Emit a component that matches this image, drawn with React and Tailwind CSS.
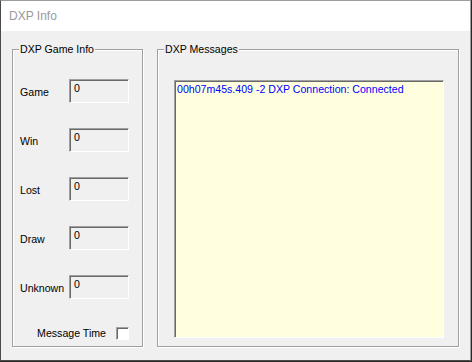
import React from 'react';

const font = { fontFamily: '"Liberation Sans", Arial, sans-serif' };

const stats = [
  { label: 'Game', value: '0' },
  { label: 'Win', value: '0' },
  { label: 'Lost', value: '0' },
  { label: 'Draw', value: '0' },
  { label: 'Unknown', value: '0' },
];

function GroupBox({ title, className, children }) {
  return (
    <div
      className={`relative border border-[#a0a0a0] shadow-[1px_1px_0_#ffffff,inset_1px_1px_0_#ffffff] ${className}`}
    >
      <span className="absolute left-[6px] top-[-7px] bg-[#f0f0f0] px-[1px] leading-[13px] text-black">
        {title}
      </span>
      {children}
    </div>
  );
}

export default function App() {
  return (
    <div className="h-[362px] w-[472px] bg-[#2b2828]" style={font}>
      <div className="flex h-[361px] w-[471px] flex-col border border-[#9c9c9c] border-l-[#4a4a4a] border-b-[#4a4a4a] bg-[#f0f0f0] text-[10.6px]">
        <div className="flex h-[30px] items-center bg-white pl-[8px] pb-[1px] text-[12px] text-[#9a9a9a]">
          DXP Info
        </div>

        <div className="flex gap-[14px] pl-[11px] pt-[18px]">
          <GroupBox title="DXP Game Info" className="h-[298px] w-[131px]">
            <div className="flex flex-col gap-[25px] pl-[7px] pt-[29px]">
              {stats.map((item) => (
                <div key={item.label} className="flex h-[24px] items-center">
                  <span className="mt-[3px] w-[49px] text-black">{item.label}</span>
                  <div className="h-[24px] w-[60px] border border-t-[#a0a0a0] border-l-[#a0a0a0] border-r-white border-b-white pl-[4px] pt-[2px] leading-[13px] text-black shadow-[inset_1px_1px_0_#696969]">
                    {item.value}
                  </div>
                </div>
              ))}
            </div>
            <div className="mt-[27px] flex items-center justify-end gap-[10px] pr-[13px]">
              <span className="text-black">Message Time</span>
              <div className="h-[13px] w-[13px] border border-t-[#a0a0a0] border-l-[#a0a0a0] border-r-white border-b-white bg-white shadow-[inset_1px_1px_0_#696969]" />
            </div>
          </GroupBox>

          <GroupBox title="DXP Messages" className="h-[298px] w-[302px]">
            <div className="pl-[16px] pt-[30px]">
              <div className="h-[258px] w-[270px] border border-t-[#a0a0a0] border-l-[#a0a0a0] border-r-white border-b-white bg-[#ffffe0] pl-[2px] pt-[2px] leading-[13px] text-[#0000ff] shadow-[inset_1px_1px_0_#696969]">
                00h07m45s.409 -2 DXP Connection: Connected
              </div>
            </div>
          </GroupBox>
        </div>
      </div>
    </div>
  );
}
